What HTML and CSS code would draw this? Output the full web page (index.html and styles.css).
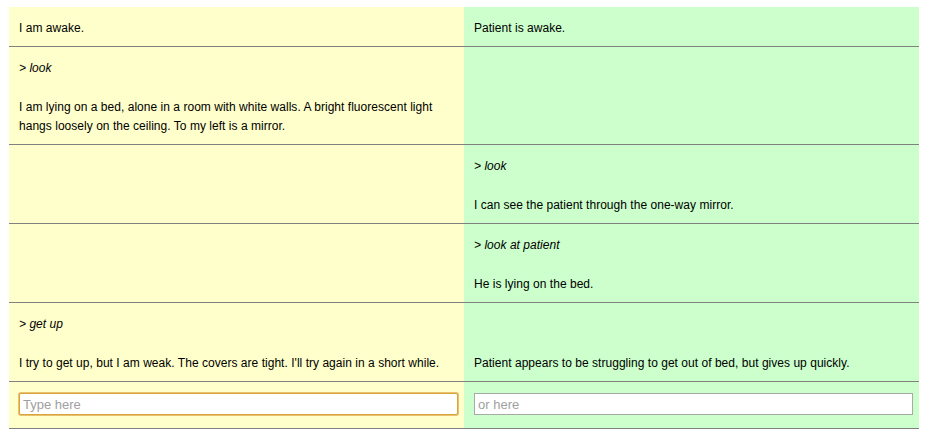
FILE: index.html
```html
<!DOCTYPE html>
<html>
<head>
<meta charset="utf-8">
<link rel="stylesheet" href="styles.css">
</head>
<body>
<table class="log">
  <tr>
    <td class="me"><p>I am awake.</p></td>
    <td class="obs"><p>Patient is awake.</p></td>
  </tr>
  <tr>
    <td class="me"><p class="cmd">&gt; look</p><p>I am lying on a bed, alone in a room with white walls. A bright fluorescent light hangs loosely on the ceiling. To my left is a mirror.</p></td>
    <td class="obs"></td>
  </tr>
  <tr>
    <td class="me"></td>
    <td class="obs"><p class="cmd">&gt; look</p><p>I can see the patient through the one-way mirror.</p></td>
  </tr>
  <tr>
    <td class="me"></td>
    <td class="obs"><p class="cmd">&gt; look at patient</p><p>He is lying on the bed.</p></td>
  </tr>
  <tr>
    <td class="me"><p class="cmd">&gt; get up</p><p>I try to get up, but I am weak. The covers are tight. I'll try again in a short while.</p></td>
    <td class="obs"><p>Patient appears to be struggling to get out of bed, but gives up quickly.</p></td>
  </tr>
  <tr class="inputs">
    <td class="me"><input class="field focused" type="text" placeholder="Type here"></td>
    <td class="obs"><input class="field" type="text" placeholder="or here"></td>
  </tr>
</table>
</body>
</html>
```

FILE: styles.css
```css
html, body {
  margin: 0;
  padding: 0;
  background: #ffffff;
}
body {
  padding: 7px 12px 0 9px;
  font-family: "Liberation Sans", Arial, sans-serif;
  font-size: 12px;
  line-height: 19px;
  letter-spacing: 0.03px;
  color: #000000;
}
.log {
  width: 910px;
  border-collapse: collapse;
  table-layout: fixed;
}
.log td {
  width: 50%;
  padding: 12px 10px 8px 10px;
  vertical-align: bottom;
  border-bottom: 1px solid #808080;
}
.log td.me {
  background: #ffffcc;
}
.log td.obs {
  background: #ccffcc;
}
.log p {
  margin: 0;
}
.log p + p {
  margin-top: 20px;
}
.log p.cmd {
  font-style: italic;
}
.inputs td {
  vertical-align: top;
  padding: 10px;
}
.field {
  display: block;
  box-sizing: border-box;
  width: 439px;
  height: 22px;
  margin: 1px 0 3px 0;
  padding: 1px 3px;
  border: 1px solid #a9a9a9;
  background: #ffffff;
  font-family: "Liberation Sans", Arial, sans-serif;
  font-size: 13px;
  letter-spacing: 0;
  color: #000000;
  outline: none;
}
.field::placeholder {
  color: #a0a0a0;
}
.field.focused {
  border: 1px solid #d9a53a;
  box-shadow: 0 0 0 1px #e8c070;
  border-radius: 2px;
}
```
